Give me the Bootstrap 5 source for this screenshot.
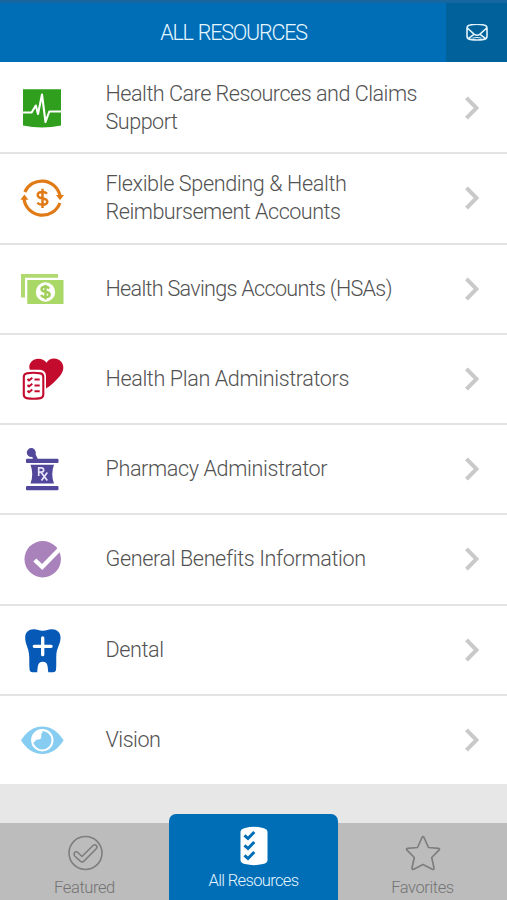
<!DOCTYPE html>
<html lang="en">
<head>
<meta charset="utf-8">
<meta name="viewport" content="width=device-width, initial-scale=1">
<title>All Resources</title>
<link href="https://cdn.jsdelivr.net/npm/bootstrap@5.3.0/dist/css/bootstrap.min.css" rel="stylesheet">
<style>
body{font-family:Roboto,"Liberation Sans",sans-serif;font-weight:300;background:#e7e7e7}
.screen{height:900px}
.topbar{height:62px;background:#006eb7;border-top:3px solid #1667a0;color:#e6f6ff}
.topbar h1{font-size:21.5px;font-weight:300;padding-left:21px;letter-spacing:-1.2px;word-spacing:1px;padding-top:1px}
.mail{width:61px;background:#00619b}
.resources{height:724px;padding-top:2px;background:#fff}
.resource{flex:1 1 0;border-bottom:2px solid #e3e3e3;padding-left:21px;padding-right:28px;color:#525252;background:#fff}
.resource:last-child{border-bottom-color:#e7e7e7}
.resource svg{flex:none;overflow:visible}
.label{margin-left:42.5px;font-size:21.6px;line-height:28px;letter-spacing:-.38px}
.tight{letter-spacing:-.5px}
.tighter{letter-spacing:-.71px}
.tabs{height:77px;background:#bcbcbc;color:#747474;font-size:16.5px;line-height:20px;letter-spacing:-.4px}
.tab{color:inherit}
.tab.current{background:#006eb7;color:#e6f6ff;height:86px;border-radius:7px 7px 0 0;letter-spacing:-.65px;padding-bottom:9px}
.tab:not(.current){padding-bottom:2px}
.tab svg{overflow:visible}
.tab-name{padding-top:7px}
</style>
<script src="https://cdn.jsdelivr.net/npm/bootstrap@5.3.0/dist/js/bootstrap.bundle.min.js"></script>
</head>
<body>
<svg class="d-none"><symbol id="chev" viewBox="0 0 14 24"><path d="M1.5 1.8 11.5 12 1.5 22.2" fill="none" stroke="#c9c9c9" stroke-width="4"/></symbol></svg>
<div class="screen d-flex flex-column overflow-hidden">
  <header class="topbar d-flex flex-shrink-0">
    <h1 class="flex-fill m-0 d-flex align-items-center justify-content-center">ALL RESOURCES</h1>
    <a class="mail d-flex align-items-center justify-content-center" href="#" aria-label="Messages">
      <svg width="22" height="18" viewBox="0 0 22 18" fill="none" stroke="#e0f3fb" stroke-width="1.6" stroke-linejoin="round"><path d="M4 1Q11-.4 18 1Q21 1.4 21 4.4V12Q21 15 18 15.4Q11 16.6 4 15.4Q1 15 1 12V4.4Q1 1.4 4 1ZM1.3 4 8.3 10.4Q11 12.2 13.7 10.4L20.7 4M2.3 14.7 8 10.4M19.7 14.7 14 10.4"/><path d="M6.5 14.1Q11 12.8 15.5 14.1" stroke-width="1"/></svg>
    </a>
  </header>
  <main class="resources d-flex flex-column flex-shrink-0">
    <a class="resource d-flex align-items-center text-decoration-none" href="#">
      <svg width="42" height="42" viewBox="0 0 42 42"><path d="M2 2.2H40V38.6Q21 42.4 2 38.6Z" fill="#2f9f1d"/><path d="M2 25.5H10.6L14.8 18.5 17 27 21 7.5 24.5 35 28.3 24.5H40" fill="none" stroke="#fff" stroke-width="2.1" stroke-linejoin="round"/></svg>
      <span class="label tight">Health Care Resources and Claims<br>Support</span><svg class="ms-auto" width="14" height="24"><use href="#chev"/></svg>
    </a>
    <a class="resource d-flex align-items-center text-decoration-none" href="#">
      <svg width="42" height="42" viewBox="0 0 42 42" fill="none" stroke="#e07b17" stroke-width="3.2"><path d="M3.8 15A18.6 18.6 0 0 1 39 19M38.9 26A18.6 18.6 0 0 1 3 22"/><path d="M35 18H43L39 23.3ZM-.6 22.8H7.4L3.4 17.5Z" fill="#e07b17" stroke="none"/><path d="M26 16.8Q24.5 14.9 21.5 14.9Q16.7 14.9 16.7 18Q16.7 20.5 21.3 21.3Q26.3 22.2 26.3 24.8Q26.3 27.7 21.6 27.7Q18 27.7 16.3 25.7M21.5 11.7V31" stroke-width="2.5"/></svg>
      <span class="label">Flexible Spending &amp; Health<br><span class="tight">Reimbursement Accounts</span></span><svg class="ms-auto" width="14" height="24"><use href="#chev"/></svg>
    </a>
    <a class="resource d-flex align-items-center text-decoration-none" href="#">
      <svg width="42" height="42" viewBox="0 0 42 42"><path d="M0 6H37V9.8H4V29.5H0Z" fill="#b0da70"/><path d="M6.3 12H42.5V36H6.3Z" fill="#aad866"/><circle cx="24.5" cy="24" r="9.7" fill="#fff"/><path d="M28.2 20.6Q27 18.8 24.4 18.8Q20.5 18.8 20.5 21.2Q20.5 23.2 24.5 23.8Q28.7 24.5 28.7 26.6Q28.7 29.2 24.6 29.2Q21.3 29.2 20 27.2M24.5 16.7V31.4" fill="none" stroke="#9fce59" stroke-width="2.4"/></svg>
      <span class="label tighter">Health Savings Accounts (HSAs)</span><svg class="ms-auto" width="14" height="24"><use href="#chev"/></svg>
    </a>
    <a class="resource d-flex align-items-center text-decoration-none" href="#">
      <svg width="42" height="42" viewBox="0 0 42 42"><path d="M25.5 4.7C28-.2 36-1.1 40 3.6C44 8.5 42.5 14 38.5 18.5C34.5 23 29 28.5 25 30.5L13 17.5C8.5 13 7 9 9.5 4.7C13-.8 22-.5 25.5 4.7Z" fill="#c30b2e"/><rect x="0" y="11.8" width="25" height="31" rx="6" fill="#fff"/><path d="M5.5 15.4Q12.5 14 19.5 15.4Q22.3 16 22.3 19V36.5Q22.3 39.5 19.5 40.1Q12.5 41.5 5.5 40.1Q2.8 39.5 2.8 36.5V19Q2.8 16 5.5 15.4Z" fill="#fff" stroke="#c30b2e" stroke-width="2.1"/><path d="M6.5 21 8 22.5 11.3 19.7M6.5 27 8 28.5 11.3 25.7M6.5 32.7 8 34.2 11.3 31.4M13.5 21.5H18.7M13.5 27.5H18.7M13.5 33.2H18.7" fill="none" stroke="#c30b2e" stroke-width="2"/></svg>
      <span class="label">Health Plan Administrators</span><svg class="ms-auto" width="14" height="24"><use href="#chev"/></svg>
    </a>
    <a class="resource d-flex align-items-center text-decoration-none" href="#">
      <svg width="42" height="42" viewBox="0 0 42 42" fill="#51479b"><rect x="5" y="10.7" width="32.5" height="4.2" rx="1"/><rect x="5" y="38" width="32.5" height="4.2" rx="1"/><path d="M9.5 16.7H33Q29.5 26 33 35.6H9.5Q13 26 9.5 16.7Z"/><circle cx="10.3" cy="4.6" r="4.5"/><path d="M10.5 6 13.5 4 16.8 11H12Z"/><path d="M17.7 28V19.8H20Q22.7 19.8 22.7 22Q22.7 24.1 20 24.1H17.7M20 24.2 26.3 32.4M26.3 24.4 20.5 32.4" fill="none" stroke="#e9e5fb" stroke-width="1.7"/></svg>
      <span class="label">Pharmacy Administrator</span><svg class="ms-auto" width="14" height="24"><use href="#chev"/></svg>
    </a>
    <a class="resource d-flex align-items-center text-decoration-none" href="#">
      <svg width="42" height="42" viewBox="0 0 42 42"><circle cx="21.7" cy="21.2" r="18.2" fill="#a981bb"/><path d="M13.8 22 21.2 29 39 10.7" fill="none" stroke="#fff" stroke-width="4.4"/></svg>
      <span class="label">General Benefits Information</span><svg class="ms-auto" width="14" height="24"><use href="#chev"/></svg>
    </a>
    <a class="resource d-flex align-items-center text-decoration-none" href="#">
      <svg width="42" height="42" viewBox="0 0 42 42"><path d="M12.5 .2C16 0 18 1.8 21.7 1.8C25.5 1.8 27.5 0 31 .2C37 .6 39.8 4 39.5 9.5C39.2 15 36 19 35.4 25C35 30 35.6 36 35 40.5Q34.8 43.2 32 43.2H27.3C26.5 38 27.5 33 21.8 32.7C16 33 17 38 16.2 43.2H11.5Q8.8 43.2 8.6 40.5C8 36 8.6 30 8 25C7.4 19 4.4 15 4.2 9.5C4 4 6.5 .6 12.5 .2Z" fill="#0759b7"/><path d="M21.7 9V25.7M13.3 17.3H30.1" stroke="#fff" stroke-width="3.3" stroke-linecap="round"/></svg>
      <span class="label">Dental</span><svg class="ms-auto" width="14" height="24"><use href="#chev"/></svg>
    </a>
    <a class="resource d-flex align-items-center text-decoration-none" href="#">
      <svg width="42" height="42" viewBox="0 0 42 42"><path d="M0 21.2C5 13.2 12 7.4 21.3 7.4S37.5 13.2 42.6 21.2C37.5 29.2 30.5 35 21.3 35S5 29.2 0 21.2Z" fill="#87cdf1"/><circle cx="21.3" cy="21.2" r="10.2" fill="#87cdf1" stroke="#fff" stroke-width="2"/><path d="M11.5 20.5Q13 12 21.5 11.5V13.5Q19.8 14.6 20.3 16.5Q20.7 20.8 17 20.5Q14.5 20.3 14 22.5L12 23.5Z" fill="#fff"/></svg>
      <span class="label tight">Vision</span><svg class="ms-auto" width="14" height="24"><use href="#chev"/></svg>
    </a>
  </main>
  <nav class="tabs d-flex align-items-end mt-auto flex-shrink-0 text-center">
    <a class="tab col-4 text-decoration-none d-flex flex-column align-items-center" href="#">
      <svg width="36" height="36" viewBox="0 0 36 36" fill="none" stroke="#7e7e7e" stroke-width="1.6"><circle cx="18.5" cy="18" r="16.5"/><path d="M7.3 18.2Q8.5 15.8 10.8 17.5L15 21.5 26 10.5Q28 8.8 29.5 10.7Q30.7 12.3 29 14L16.7 26.3Q15 27.7 13.3 26.2L7.7 21Q6.5 19.8 7.3 18.2Z"/></svg>
      <span class="tab-name">Featured</span>
    </a>
    <a class="tab current col-4 text-decoration-none d-flex flex-column align-items-center justify-content-between pt-2" href="#">
      <svg class="mt-1" width="28" height="40" viewBox="0 0 28 40"><path d="M5 2Q14-.3 23 2Q27.5 3 27.5 6V34Q27.5 37 23 38Q14 40.3 5 38Q.5 37 .5 34V6Q.5 3 5 2Z" fill="#fff"/><path d="M4.5 9.3 8 12.5 14.3 6M4.5 19.3 8 22.5 14.3 16M4.5 29.3 8 32.5 14.3 26" fill="none" stroke="#006eb7" stroke-width="3"/></svg>
      <span>All Resources</span>
    </a>
    <a class="tab col-4 text-decoration-none d-flex flex-column align-items-center" href="#">
      <svg width="36" height="36" viewBox="0 0 36 36" fill="none" stroke="#7e7e7e" stroke-width="1.7" stroke-linejoin="round"><path d="M17 2.5Q18 .8 19 2.5L23.5 12.5 33.5 13.3Q35.2 13.8 34 15.2L26.7 22.5 29 33Q29 34.8 27.3 34.2L18 29.5 8.7 34.2Q7 34.8 7 33L9.3 22.5 2 15.2Q.8 13.8 2.5 13.3L12.5 12.5Z"/></svg>
      <span class="tab-name">Favorites</span>
    </a>
  </nav>
</div>
</body>
</html>
